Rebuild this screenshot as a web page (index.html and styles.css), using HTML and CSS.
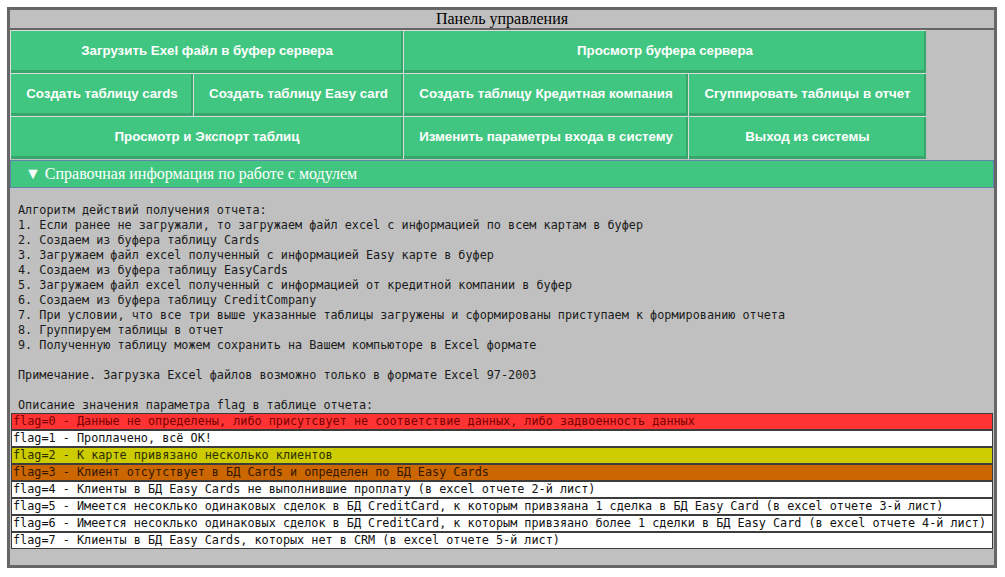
FILE: index.html
```html
<!DOCTYPE html>
<html lang="ru">
<head>
<meta charset="utf-8">
<title>Панель управления</title>
<link rel="stylesheet" href="styles.css">
</head>
<body>
<div class="panel">
  <div class="panel-title">Панель управления</div>
  <div class="menu">
    <button class="btn span2">Загрузить Exel файл в буфер сервера</button>
    <button class="btn span2">Просмотр буфера сервера</button>
    <button class="btn">Создать таблицу cards</button>
    <button class="btn">Создать таблицу Easy card</button>
    <button class="btn">Создать таблицу Кредитная компания</button>
    <button class="btn">Сгуппировать таблицы в отчет</button>
    <button class="btn span2">Просмотр и Экспорт таблиц</button>
    <button class="btn">Изменить параметры входа в систему</button>
    <button class="btn">Выход из системы</button>
  </div>
  <details class="help" open>
    <summary class="help-head">▼ Справочная информация по работе с модулем</summary>
<pre class="help-text">Алгоритм действий получения отчета:
1. Если ранее не загружали, то загружаем файл excel с информацией по всем картам в буфер
2. Создаем из буфера таблицу Cards
3. Загружаем файл excel полученный с информацией Easy карте в буфер
4. Создаем из буфера таблицу EasyCards
5. Загружаем файл excel полученный с информацией от кредитной компании в буфер
6. Создаем из буфера таблицу CreditCompany
7. При условии, что все три выше указанные таблицы загружены и сформированы приступаем к формированию отчета
8. Группируем таблицы в отчет
9. Полученную таблицу можем сохранить на Вашем компьюторе в Excel формате

Примечание. Загрузка Excel файлов возможно только в формате Excel 97-2003

Описание значения параметра flag в таблице отчета:</pre>
    <div class="flags">
      <div class="flag flag-red">flag=0 - Данные не определены, либо присутсвует не соответствие данных, либо задвоенность данных</div>
      <div class="flag">flag=1 - Проплачено, всё ОК!</div>
      <div class="flag flag-yellow">flag=2 - К карте привязано несколько клиентов</div>
      <div class="flag flag-orange">flag=3 - Клиент отсутствует в БД Cards и определен по БД Easy Cards</div>
      <div class="flag">flag=4 - Клиенты в БД Easy Cards не выполнившие проплату (в excel отчете 2-й лист)</div>
      <div class="flag">flag=5 - Имеется несоклько одинаковых сделок в БД CreditCard, к которым привзяана 1 сделка в БД Easy Card (в excel отчете 3-й лист)</div>
      <div class="flag">flag=6 - Имеется несоклько одинаковых сделок в БД CreditCard, к которым привзяано более 1 сделки в БД Easy Card (в excel отчете 4-й лист)</div>
      <div class="flag">flag=7 - Клиенты в БД Easy Cards, которых нет в CRM (в excel отчете 5-й лист)</div>
    </div>
  </details>
</div>
</body>
</html>
```
FILE: styles.css
```css
html, body {
  margin: 0;
  padding: 0;
  background: #ffffff;
}

.panel {
  box-sizing: border-box;
  width: 990px;
  margin: 7px;
  border: 3px solid #666666;
  background: #c0c0c0;
  padding-bottom: 16px;
}

.panel-title {
  height: 18px;
  line-height: 18px;
  text-align: center;
  font-family: "Liberation Serif", serif;
  font-size: 16px;
  color: #000;
  border-bottom: 2px solid #666666;
}

.menu {
  display: grid;
  grid-template-columns: 183px 210px 285px 238px;
  grid-auto-rows: 43px;
}

.span2 {
  grid-column: span 2;
}

.btn {
  box-sizing: border-box;
  margin: 0;
  padding: 0 0 4px;
  background: #40c680;
  border: 1px solid #dcdcdc;
  border-right: none;
  border-bottom: none;
  box-shadow: inset -2px -3px 0 #38a56d;
  color: #ffffff;
  font-family: "Liberation Sans", Arial, sans-serif;
  font-weight: bold;
  font-size: 13.3px;
  text-align: center;
}

.help {
  margin-top: 1px;
}

.help-head {
  list-style: none;
  box-sizing: border-box;
  height: 28px;
  line-height: 26px;
  padding-left: 14px;
  background: #40c680;
  border: 1px solid #5f86ad;
  color: #ffffff;
  font-family: "Liberation Serif", serif;
  font-size: 16px;
  cursor: pointer;
}

.help-head::-webkit-details-marker {
  display: none;
}

.help-text {
  margin: 15px 0 0;
  padding: 0 8px;
  font-family: "DejaVu Sans Mono", "Liberation Mono", monospace;
  font-size: 11.8px;
  line-height: 15px;
  color: #1a1a1a;
}

.flags {
  margin: 0 1px;
}

.flag {
  height: 15px;
  line-height: 15px;
  padding-left: 1px;
  border: 1px solid #3c3c3c;
  background: #ffffff;
  font-family: "DejaVu Sans Mono", "Liberation Mono", monospace;
  font-size: 11.8px;
  color: #111;
  white-space: pre;
  overflow: hidden;
}

.flag-red {
  background: #ff3333;
  color: #7a0000;
}

.flag-yellow {
  background: #cccc00;
  color: #2e2e00;
}

.flag-orange {
  background: #cc6600;
  color: #331800;
}
```
